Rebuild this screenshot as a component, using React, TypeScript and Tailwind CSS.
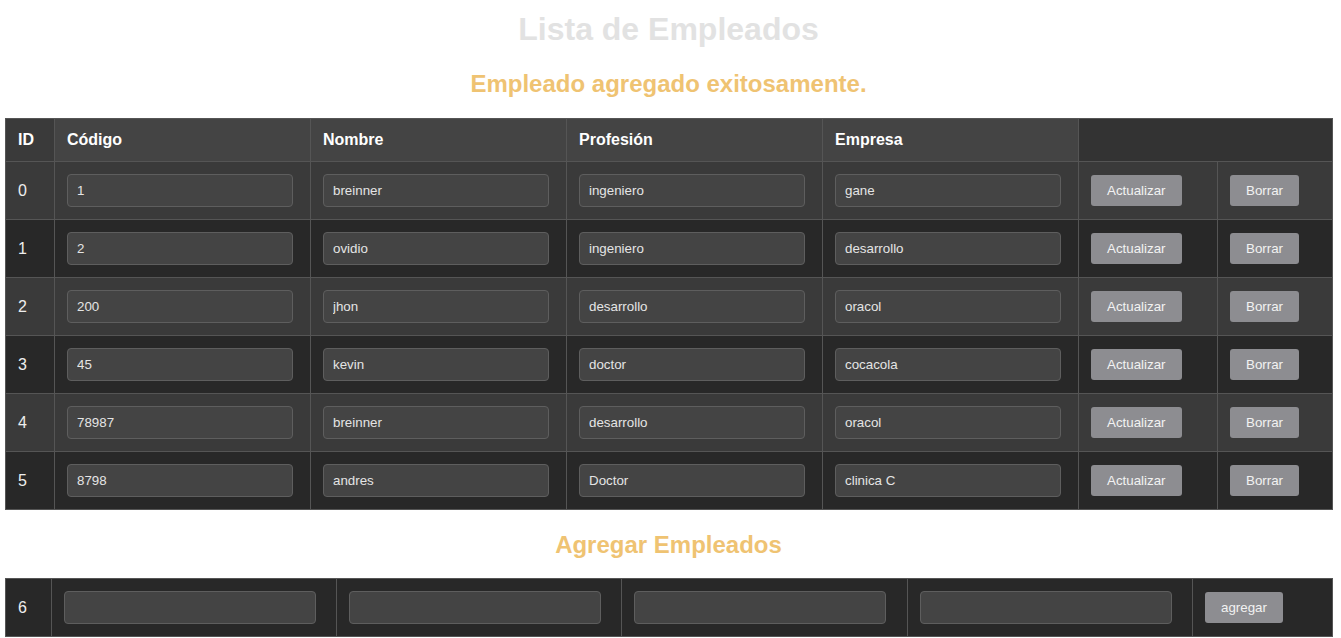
const empleados = [
  { id: 0, codigo: '1', nombre: 'breinner', profesion: 'ingeniero', empresa: 'gane' },
  { id: 1, codigo: '2', nombre: 'ovidio', profesion: 'ingeniero', empresa: 'desarrollo' },
  { id: 2, codigo: '200', nombre: 'jhon', profesion: 'desarrollo', empresa: 'oracol' },
  { id: 3, codigo: '45', nombre: 'kevin', profesion: 'doctor', empresa: 'cocacola' },
  { id: 4, codigo: '78987', nombre: 'breinner', profesion: 'desarrollo', empresa: 'oracol' },
  { id: 5, codigo: '8798', nombre: 'andres', profesion: 'Doctor', empresa: 'clinica C' },
];

const font = { fontFamily: '"Liberation Sans", Arial, sans-serif' };

function Campo({ value, wide }: { value?: string; wide?: boolean }) {
  return (
    <input
      defaultValue={value}
      className={`${wide ? 'w-[252px]' : 'w-[226px]'} h-[33px] rounded-[4px] border border-[#5e5e5e] bg-[#444444] px-[9px] text-[13.33px] text-[#e4e4e4] outline-none`}
      style={font}
    />
  );
}

function Boton({ children }: { children: string }) {
  return (
    <button
      className="h-[31px] rounded-[3px] bg-[#8d8d91] px-4 text-[13.33px] text-[#f2f2f2]"
      style={font}
    >
      {children}
    </button>
  );
}

export default function App() {
  return (
    <div className="min-h-screen bg-white pl-[5px] pr-[9px]" style={font}>
      <h1 className="pt-[11px] text-center text-[32px] font-bold leading-[37px] text-[#e2e2e2]">
        Lista de Empleados
      </h1>
      <h2 className="mt-[22px] text-center text-[24px] font-bold leading-[28px] text-[#efc372]">
        Empleado agregado exitosamente.
      </h2>

      <table className="mt-[20px] w-[1327px] table-fixed border-collapse text-white">
        <colgroup>
          <col className="w-[49px]" />
          <col className="w-[256px]" />
          <col className="w-[256px]" />
          <col className="w-[256px]" />
          <col className="w-[256px]" />
          <col className="w-[139px]" />
          <col className="w-[115px]" />
        </colgroup>
        <thead>
          <tr className="h-[43px] text-left text-[16px] font-bold">
            <th className="border border-[#555555] bg-[#3a3a3a] px-[12px]">ID</th>
            <th className="border border-[#555555] bg-[#444444] px-[12px]">Código</th>
            <th className="border border-[#555555] bg-[#444444] px-[12px]">Nombre</th>
            <th className="border border-[#555555] bg-[#444444] px-[12px]">Profesión</th>
            <th className="border border-[#555555] bg-[#444444] px-[12px]">Empresa</th>
            <th colSpan={2} className="border border-[#555555] bg-[#333333]"></th>
          </tr>
        </thead>
        <tbody>
          {empleados.map((e, i) => (
            <tr key={e.id} className={`h-[58px] ${i % 2 === 0 ? 'bg-[#3a3a3a]' : 'bg-[#282828]'}`}>
              <td className="border border-[#555555] px-[12px] text-[16px] text-[#eeeeee]">{e.id}</td>
              <td className="border border-[#555555] px-[12px]"><Campo value={e.codigo} /></td>
              <td className="border border-[#555555] px-[12px]"><Campo value={e.nombre} /></td>
              <td className="border border-[#555555] px-[12px]"><Campo value={e.profesion} /></td>
              <td className="border border-[#555555] px-[12px]"><Campo value={e.empresa} /></td>
              <td className="border border-[#555555] px-[12px]"><Boton>Actualizar</Boton></td>
              <td className="border border-[#555555] px-[12px]"><Boton>Borrar</Boton></td>
            </tr>
          ))}
        </tbody>
      </table>

      <h2 className="mt-[21px] text-center text-[24px] font-bold leading-[28px] text-[#efc372]">
        Agregar Empleados
      </h2>

      <table className="mt-[19px] w-[1327px] table-fixed border-collapse text-white">
        <colgroup>
          <col className="w-[46px]" />
          <col className="w-[285px]" />
          <col className="w-[285px]" />
          <col className="w-[286px]" />
          <col className="w-[285px]" />
          <col className="w-[140px]" />
        </colgroup>
        <tbody>
          <tr className="h-[58px] bg-[#282828]">
            <td className="border border-[#555555] px-[12px] text-[16px] text-[#eeeeee]">6</td>
            <td className="border border-[#555555] px-[12px]"><Campo wide /></td>
            <td className="border border-[#555555] px-[12px]"><Campo wide /></td>
            <td className="border border-[#555555] px-[12px]"><Campo wide /></td>
            <td className="border border-[#555555] px-[12px]"><Campo wide /></td>
            <td className="border border-[#555555] px-[12px]"><Boton>agregar</Boton></td>
          </tr>
        </tbody>
      </table>
    </div>
  );
}
